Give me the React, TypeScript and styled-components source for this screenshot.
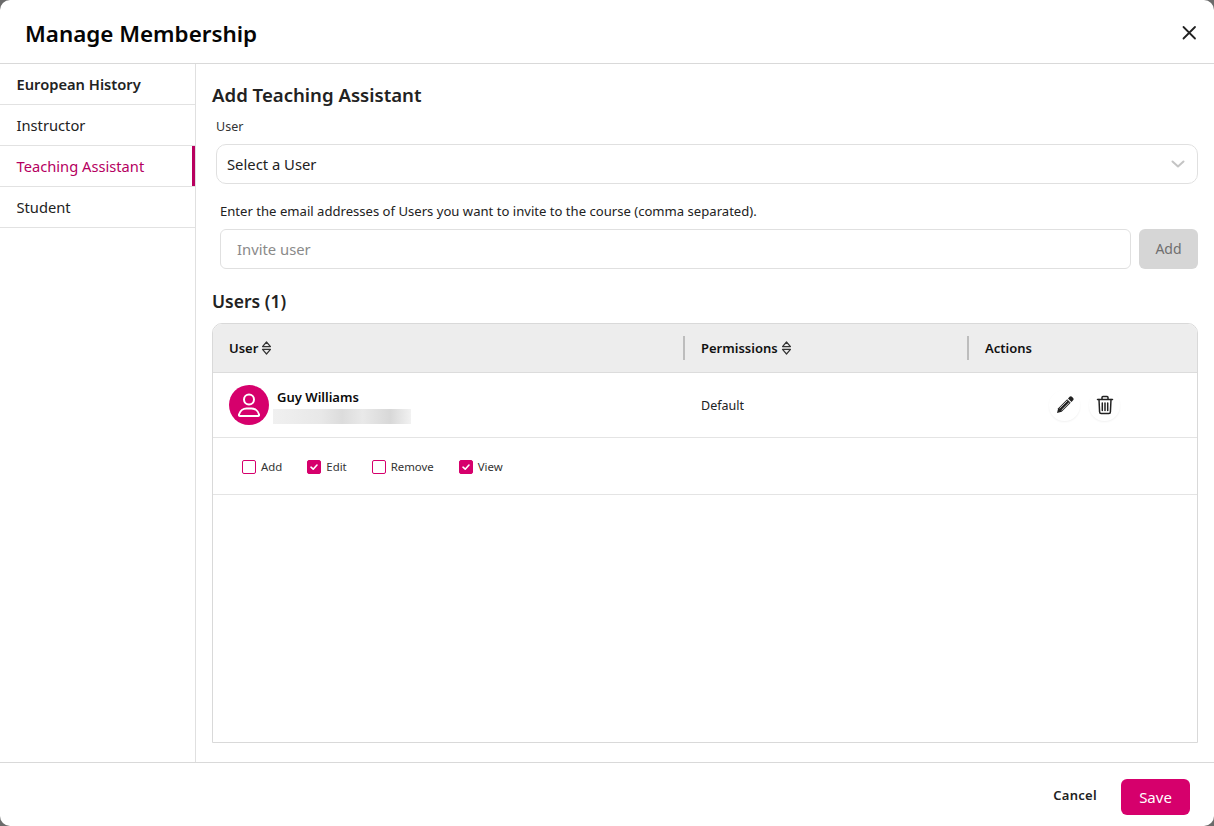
import React from "react";
import styled, { createGlobalStyle } from "styled-components";

const Global = createGlobalStyle`
  html, body { margin: 0; padding: 0; background: #6b6b6b; }
  * { box-sizing: border-box; }
  body { font-family: "Noto Sans", "Liberation Sans", sans-serif; color: #111; }
`;

const Dialog = styled.div`
  width: 1214px; height: 826px; background: #fff; border-radius: 10px; overflow: hidden;
  display: flex; flex-direction: column;
`;
const Header = styled.header`
  height: 64px; flex: none; border-bottom: 1px solid #d9d9d9; display: flex; align-items: center;
  justify-content: space-between; padding: 5px 17px 0 25px;
`;
const Title = styled.h1`
  margin: 0; font: 600 22.400px/1 "Noto Sans", sans-serif; color: #050505;
`;
const CloseButton = styled.button`
  border: 0; background: none; padding: 0; width: 16px; height: 16px; display: flex; color: #222; margin-top: -3px;
`;
const Body = styled.div`flex: 1; display: flex; min-height: 0;`;
const Sidebar = styled.nav`width: 196px; flex: none; border-right: 1px solid #e0e0e0;`;
const NavItem = styled.div<{ $active?: boolean; $bold?: boolean }>`
  height: 41px; padding-left: 16.500px; display: flex; align-items: center;
  border-bottom: 1px solid #e2e2e2; font: ${p => (p.$bold ? 600 : 400)} 14.700px/1 "Noto Sans", sans-serif;
  color: ${p => (p.$active ? "#b5005f" : "#222")};
  box-shadow: ${p => (p.$active ? "inset -3px 0 0 #b8005f" : "none")};
`;
const Main = styled.main`flex: 1; padding: 20px 16px 19px; display: flex; flex-direction: column; min-width: 0;`;
const SectionTitle = styled.h2`
  margin: 0; font: 600 18.600px/22px "Noto Sans", sans-serif; color: #222;
`;
const FieldLabel = styled.div`
  margin: 12px 0 0 4px; font: 400 12.500px/18px "Noto Sans", sans-serif; color: #333;
`;
const Select = styled.div`
  margin: 8px 0 0 4px; height: 40px; border: 1px solid #e0e0e0; border-radius: 10px; display: flex;
  align-items: center; justify-content: space-between; padding: 0 12px 0 10px;
  font: 400 14.800px/1 "Noto Sans", sans-serif; color: #222;
`;
const HelpText = styled.div`
  margin: 18px 0 0 8px; font: 400 13.100px/18px "Noto Sans", sans-serif; color: #222;
`;
const InviteRow = styled.div`margin: 9px 0 0 8px; display: flex; gap: 8px;`;
const Invite = styled.div`
  flex: 1; height: 40px; border: 1px solid #e0e0e0; border-radius: 6px; padding-left: 16px;
  display: flex; align-items: center; font: 400 14.800px/1 "Noto Sans", sans-serif; color: #8a8a8a;
`;
const AddButton = styled.button`
  width: 59px; height: 40px; border: 0; border-radius: 6px; background: #d6d6d6; color: #6f6f6f;
  font: 400 14px/1 "Noto Sans", sans-serif; padding: 0;
`;
const UsersTitle = styled(SectionTitle)`margin-top: 21px; font-size: 17.500px;`;
const Table = styled.section`
  margin-top: 11px; flex: 1; border: 1px solid #d9d9d9; border-radius: 10px 10px 0 0; overflow: hidden;
`;
const Cols = styled.div`display: grid; grid-template-columns: 470px 284px 1fr; align-items: center;`;
const HeadRow = styled(Cols)`height: 49px; background: #ededed; border-bottom: 1px solid #dcdcdc;`;
const HeadCell = styled.div<{ $divider?: boolean }>`
  height: 24px; padding-left: 16px; display: flex; align-items: center; gap: 3px;
  border-left: ${p => (p.$divider ? "2px solid #bdbdbd" : "0")};
  font: 600 13px/1 "Noto Sans", sans-serif; color: #111;
`;
const UserRow = styled(Cols)`height: 65px; border-bottom: 1px solid #e4e4e4;`;
const UserCell = styled.div`display: flex; padding-left: 16px; align-items: center;`;
const Avatar = styled.div`
  width: 40px; height: 40px; border-radius: 50%; background: #d6006c; display: flex; align-items: center; justify-content: center;
`;
const UserText = styled.div`margin: 2px 0 0 4px; display: flex; flex-direction: column; align-items: flex-start;`;
const UserName = styled.div`
  margin: 0 0 3px 4px; font: 600 13px/18px "Noto Sans", sans-serif; color: #0a0a0a;
`;
const Blur = styled.div`
  width: 138px; height: 15px;
  background: linear-gradient(90deg, #f0f0f0 0%, #e8e8e8 35%, #dcdcdc 50%, #e9e9e9 65%, #d8d8d8 85%, #f2f2f2 100%);
`;
const PermText = styled.div`padding: 3px 0 0 18px; font: 400 12.500px/1 "Noto Sans", sans-serif; color: #222;`;
const ActionCell = styled.div`display: flex; gap: 9px; padding-left: 82px;`;
const RoundButton = styled.button`
  width: 31px; height: 31px; border: 0; border-radius: 50%; background: #fff; padding: 0;
  box-shadow: 0 1px 2px rgba(0,0,0,.06); display: flex; align-items: center; justify-content: center;
`;
const PermRow = styled.div`
  height: 57px; border-bottom: 1px solid #e4e4e4; display: flex; align-items: center; padding: 1px 0 0 29px;
`;
const Check = styled.label`
  display: flex; align-items: center; gap: 5px; margin-right: 25px;
  font: 400 11.400px/1 "Noto Sans", sans-serif; color: #333;
`;
const Box = styled.span<{ $on?: boolean }>`
  width: 14px; height: 14px; border: 1.600px solid #d6006c; border-radius: 2px; display: flex;
  align-items: center; justify-content: center; background: ${p => (p.$on ? "#d6006c" : "#fff")};
`;
const Footer = styled.footer`
  height: 64px; flex: none; border-top: 1px solid #d9d9d9; display: flex; align-items: center; justify-content: flex-end;
  padding: 5px 24px 0 0; gap: 24px;
`;
const Cancel = styled.button`
  border: 0; background: none; padding: 0 0 4px; font: 600 13px/1 "Noto Sans", sans-serif; letter-spacing: .3px; color: #222;
`;
const Save = styled.button`
  width: 69px; height: 36px; border: 0; border-radius: 6px; background: #d6006c; color: #fff;
  font: 400 15px/1 "Noto Sans", sans-serif; padding: 0;
`;

const Sort = () => (
  <svg width="11" height="14" viewBox="0 0 11 14" fill="none" stroke="#333" strokeWidth="1.2" strokeLinejoin="round">
    <path d="M5.500 1 9.500 5.600H1.500Z" />
    <path d="M5.500 13 9.500 8.400H1.500Z" />
  </svg>
);
const Tick = () => (
  <svg width="10" height="10" viewBox="0 0 10 10" fill="none" stroke="#fff" strokeWidth="1.6" strokeLinecap="round" strokeLinejoin="round">
    <path d="M2 5.200 4.200 7.200 8 3" />
  </svg>
);

const perms: [string, boolean][] = [["Add", false], ["Edit", true], ["Remove", false], ["View", true]];
const nav = ["European History", "Instructor", "Teaching Assistant", "Student"];

export default function App() {
  return (
    <Dialog>
      <Global />
      <Header>
        <Title>Manage Membership</Title>
        <CloseButton aria-label="Close">
          <svg width="16" height="16" viewBox="0 0 16 16" stroke="currentColor" strokeWidth="1.8" strokeLinecap="round">
            <path d="M2.500 2 14 13.500M14 2 2.500 13.500" />
          </svg>
        </CloseButton>
      </Header>
      <Body>
        <Sidebar>
          {nav.map((n, i) => (
            <NavItem key={n} $bold={i === 0} $active={i === 2}>{n}</NavItem>
          ))}
        </Sidebar>
        <Main>
          <SectionTitle>Add Teaching Assistant</SectionTitle>
          <FieldLabel>User</FieldLabel>
          <Select>
            Select a User
            <svg width="14" height="8" viewBox="0 0 14 8" fill="none" stroke="#c4c4c4" strokeWidth="2" strokeLinecap="round" strokeLinejoin="round">
              <path d="M1.500 1.500 7 6.500 12.500 1.500" />
            </svg>
          </Select>
          <HelpText>Enter the email addresses of Users you want to invite to the course (comma separated).</HelpText>
          <InviteRow>
            <Invite>Invite user</Invite>
            <AddButton>Add</AddButton>
          </InviteRow>
          <UsersTitle>Users (1)</UsersTitle>
          <Table>
            <HeadRow>
              <HeadCell>User <Sort /></HeadCell>
              <HeadCell $divider>Permissions <Sort /></HeadCell>
              <HeadCell $divider>Actions</HeadCell>
            </HeadRow>
            <UserRow>
              <UserCell>
                <Avatar>
                  <svg width="24" height="26" viewBox="0 0 24 26" fill="none" stroke="#fff" strokeWidth="2">
                    <circle cx="12" cy="7.500" r="5" />
                    <path d="M3 24h18c1 0 1.200-.8 1-1.600C21 18.500 17.500 16.500 14.500 16.500h-5C6.500 16.500 3 18.500 2 22.400 1.800 23.200 2 24 3 24Z" />
                  </svg>
                </Avatar>
                <UserText>
                  <UserName>Guy Williams</UserName>
                  <Blur />
                </UserText>
              </UserCell>
              <PermText>Default</PermText>
              <ActionCell>
                <RoundButton aria-label="Edit">
                  <svg width="20" height="20" viewBox="0 0 20 20">
                    <path d="M14.600 1.800c.7-.7 1.700-.7 2.400 0l1.100 1.100c.7.7.7 1.700 0 2.400l-1.600 1.600-3.500-3.500Z" fill="#222" />
                    <path d="M12.200 4.200l3.500 3.500-9 9-4.700 1.300 1.200-4.800Z" fill="#222" />
                    <path d="M4.600 13.300 12.300 5.700M6.600 15.200 14.300 7.500" stroke="#ddd" strokeWidth="0.9" fill="none" />
                  </svg>
                </RoundButton>
                <RoundButton aria-label="Delete">
                  <svg width="18" height="20" viewBox="0 0 18 20" fill="none" stroke="#222" strokeWidth="1.5" strokeLinecap="round" strokeLinejoin="round">
                    <path d="M1.500 4.500h15M6 4.500V2.500c0-.6.400-1 1-1h4c.6 0 1 .4 1 1v2" />
                    <path d="M3 4.500l.6 12.500c0 .9.700 1.500 1.500 1.500h7.800c.8 0 1.500-.6 1.500-1.500L15 4.500" />
                    <path d="M6.300 8v7.500M9 8v7.500M11.700 8v7.500" />
                  </svg>
                </RoundButton>
              </ActionCell>
            </UserRow>
            <PermRow>
              {perms.map(([label, on]) => (
                <Check key={label}>
                  <Box $on={on}>{on && <Tick />}</Box>
                  {label}
                </Check>
              ))}
            </PermRow>
          </Table>
        </Main>
      </Body>
      <Footer>
        <Cancel>Cancel</Cancel>
        <Save>Save</Save>
      </Footer>
    </Dialog>
  );
}
